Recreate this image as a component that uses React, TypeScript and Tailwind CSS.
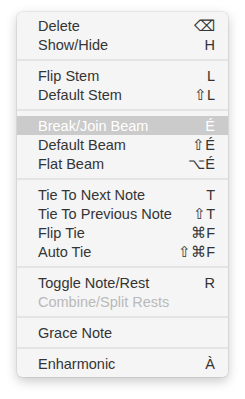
type Item = { label: string; key?: string; disabled?: boolean; active?: boolean };

const groups: Item[][] = [
  [
    { label: "Delete", key: "⌫" },
    { label: "Show/Hide", key: "H" },
  ],
  [
    { label: "Flip Stem", key: "L" },
    { label: "Default Stem", key: "⇧L" },
  ],
  [
    { label: "Break/Join Beam", key: "É", active: true },
    { label: "Default Beam", key: "⇧É" },
    { label: "Flat Beam", key: "⌥É" },
  ],
  [
    { label: "Tie To Next Note", key: "T" },
    { label: "Tie To Previous Note", key: "⇧T" },
    { label: "Flip Tie", key: "⌘F" },
    { label: "Auto Tie", key: "⇧⌘F" },
  ],
  [
    { label: "Toggle Note/Rest", key: "R" },
    { label: "Combine/Split Rests", disabled: true },
  ],
  [{ label: "Grace Note" }],
  [{ label: "Enharmonic", key: "À" }],
];

function Row({ item }: { item: Item }) {
  const color = item.active
    ? "bg-[#cbcbcb] text-white"
    : item.disabled
      ? "text-[#b9b9b9]"
      : "text-[#343434]";
  return (
    <div className={`flex h-[19px] items-center justify-between pt-[2px] pl-[21px] pr-[13px] ${color}`}>
      <span>{item.label}</span>
      {item.key && <span>{item.key}</span>}
    </div>
  );
}

export default function App() {
  return (
    <div
      className="min-h-screen bg-white pl-[17px] pt-[12px]"
      style={{ fontFamily: '"Liberation Sans", Arial, sans-serif' }}
    >
      <div className="w-[211px] rounded-[5px] bg-[#f5f5f5] py-[4px] text-[14.5px] leading-none shadow-[0_0_0_0.5px_rgba(0,0,0,0.12),0_4px_12px_rgba(0,0,0,0.22)]">
        {groups.map((g, i) => (
          <div key={i}>
            {i > 0 && (
              <div className="flex h-[12px] items-center">
                <div className="h-[2px] w-full bg-[#e4e4e4]" />
              </div>
            )}
            {g.map((item) => (
              <Row key={item.label} item={item} />
            ))}
          </div>
        ))}
      </div>
    </div>
  );
}
